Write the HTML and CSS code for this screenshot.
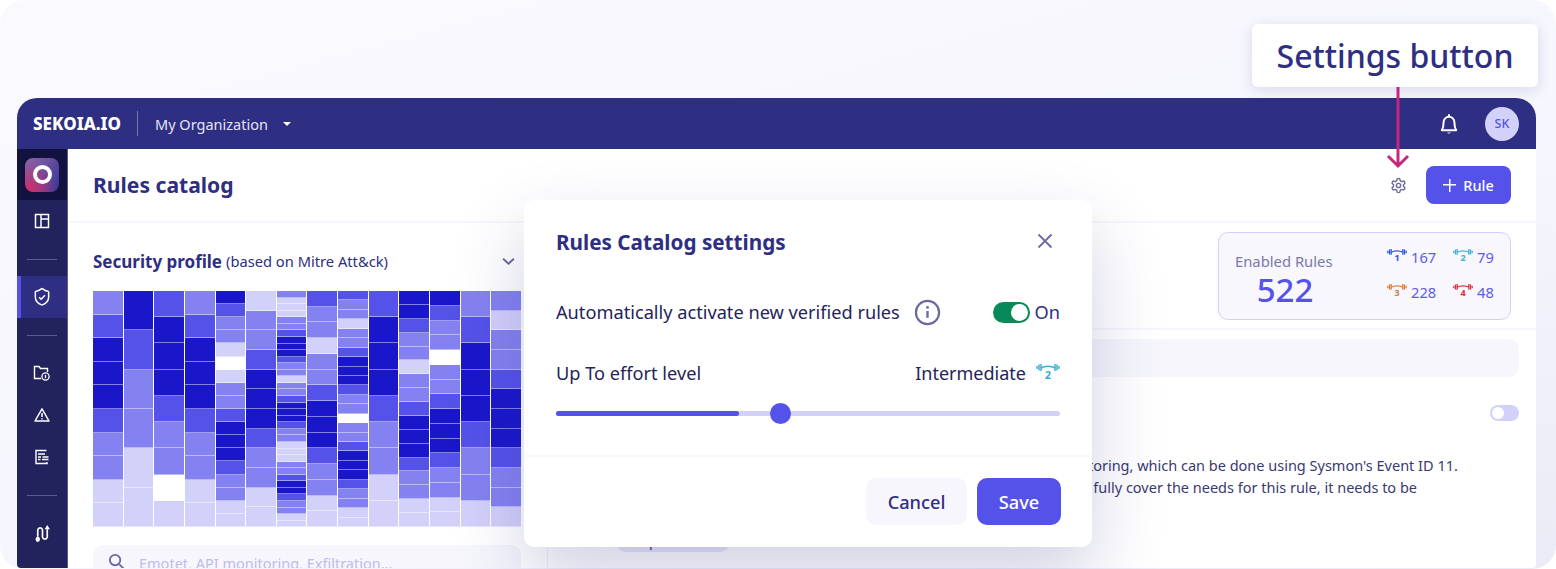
FILE: index.html
```html
<!DOCTYPE html>
<html lang="en">
<head>
<meta charset="utf-8">
<title>Rules catalog</title>
<link rel="stylesheet" href="styles.css">
</head>
<body>
<svg class="defs" width="0" height="0" aria-hidden="true">
  <symbol id="bell" viewBox="0 0 20 24"><path d="M4 10a6 6 0 0 1 12 0c0 6 1 7.500 2 9H2c1-1.500 2-3 2-9zM10 4V2" fill="none" stroke="currentColor" stroke-width="2.200" stroke-linejoin="round" stroke-linecap="round"/><path d="M8 21.500a2.300 2.300 0 0 0 4 0z" fill="currentColor"/></symbol>
  <symbol id="bar" viewBox="0 0 24 8"><path d="M5 5C9 2.500 15 2.500 19 5" fill="none" stroke="currentColor" stroke-width="1.500"/><path d="M1 3v3M3 1.500v6M5 1v7M19 1v7M21 1.500v6M23 3v3" stroke="currentColor" stroke-width="1.500" fill="none"/></symbol>
</svg>
<div class="page">
  <div class="app">
    <header class="topbar">
      <span class="brand">SEKOIA.IO</span>
      <span class="brand-sep"></span>
      <span class="org">My Organization</span>
      <span class="caret"></span>
      <svg class="bell"><use href="#bell"/></svg>
      <span class="avatar">SK</span>
    </header>
    <div class="shell">
      <nav class="side">
        <div class="side-logo"><span class="logo-tile"><span class="logo-ring"></span></span></div>
        <a class="side-item"><svg viewBox="0 0 16 16" class="side-icon"><path d="M1.500 1.500h13v13h-13zM7 1.500v13M7 6h7.500" fill="none" stroke="currentColor" stroke-width="1.500"/></svg></a>
        <div class="side-rule"></div>
        <a class="side-item active"><svg viewBox="0 0 24 24" class="side-icon big"><path d="M20 12c0 5.500-3.500 8-7.660 9.500a1 1 0 0 1-.68 0C7.500 20 4 17.500 4 12V6a1 1 0 0 1 1-1c2 0 4.500-1.200 6.240-2.720a1.170 1.170 0 0 1 1.520 0C14.510 3.810 17 5 19 5a1 1 0 0 1 1 1z" fill="none" stroke="currentColor" stroke-width="1.800"/><path d="m8.500 12.200 2.500 2.500 4.500-4.700" fill="none" stroke="currentColor" stroke-width="1.800"/></svg></a>
        <div class="side-rule"></div>
        <a class="side-item"><svg viewBox="0 0 18 16" class="side-icon wide"><path d="M8 13.500H1.500v-12H6l1.500 2h7V7" fill="none" stroke="currentColor" stroke-width="1.400"/><circle cx="12.500" cy="11.500" r="3.600" fill="none" stroke="currentColor" stroke-width="1.300"/><path d="M12.500 9.800v3.400" stroke="currentColor" stroke-width="1.300"/></svg></a>
        <a class="side-item"><svg viewBox="0 0 16 16" class="side-icon"><path d="M8 1.800 15 14H1z" fill="none" stroke="currentColor" stroke-width="1.500" stroke-linejoin="round"/><path d="M8 6v4M8 11.200v1.300" stroke="currentColor" stroke-width="1.500"/></svg></a>
        <a class="side-item"><svg viewBox="0 0 16 16" class="side-icon"><path d="M12.500 1.500H2v13h11V13" fill="none" stroke="currentColor" stroke-width="1.400"/><path d="M4 5h7M4 8h3M8.500 8h6M4 10.500h2.500M8 10.500h6.500" stroke="currentColor" stroke-width="1.300" fill="none"/></svg></a>
        <div class="side-rule"></div>
        <a class="side-item"><svg viewBox="0 0 16 18" class="side-icon route"><path d="M3.500 12V5.500a2.300 2.300 0 0 1 4.500 0v7a2.300 2.300 0 0 0 4.500 0V5" fill="none" stroke="currentColor" stroke-width="1.600"/><rect x="1.500" y="12" width="4" height="5" rx="2" fill="currentColor"/><path d="M12.500 1 15 5h-5z" fill="currentColor"/></svg></a>
      </nav>
      <main class="main">
        <div class="page-head">
          <h1 class="page-title">Rules catalog</h1>
          <svg viewBox="0 0 24 24" class="gear"><path d="M12.220 2h-.44a2 2 0 0 0-2 2v.18a2 2 0 0 1-1 1.730l-.43.25a2 2 0 0 1-2 0l-.15-.08a2 2 0 0 0-2.730.73l-.22.38a2 2 0 0 0 .73 2.730l.15.1a2 2 0 0 1 1 1.720v.51a2 2 0 0 1-1 1.740l-.15.09a2 2 0 0 0-.73 2.730l.22.38a2 2 0 0 0 2.730.73l.15-.08a2 2 0 0 1 2 0l.43.25a2 2 0 0 1 1 1.730V20a2 2 0 0 0 2 2h.44a2 2 0 0 0 2-2v-.18a2 2 0 0 1 1-1.730l.43-.25a2 2 0 0 1 2 0l.15.08a2 2 0 0 0 2.730-.73l.22-.39a2 2 0 0 0-.73-2.730l-.15-.08a2 2 0 0 1-1-1.740v-.5a2 2 0 0 1 1-1.740l.15-.09a2 2 0 0 0 .73-2.730l-.22-.38a2 2 0 0 0-2.730-.73l-.15.08a2 2 0 0 1-2 0l-.43-.25a2 2 0 0 1-1-1.730V4a2 2 0 0 0-2-2z" fill="none" stroke="currentColor" stroke-width="2"/><circle cx="12" cy="12" r="3" fill="none" stroke="currentColor" stroke-width="2"/></svg>
          <button class="btn-rule"><span class="plus"></span>Rule</button>
        </div>
        <div class="body">
          <section class="left">
            <div class="profile-head">
              <span class="profile-title">Security profile</span>
              <span class="profile-sub">(based on Mitre Att&amp;ck)</span>
              <svg viewBox="0 0 12 8" class="chev"><path d="M1 1.500 6 6l5-4.500" fill="none" stroke="currentColor" stroke-width="1.800"/></svg>
            </div>
            <div class="heat">
              <div class="col"><i class="m"></i><i class="s"></i><i class="d"></i><i class="d"></i><i class="d"></i><i class="s"></i><i class="m"></i><i class="m"></i><i class="l"></i><i class="l"></i></div>
              <div class="col"><i class="d"></i><i class="s"></i><i class="m"></i><i class="m"></i><i class="l"></i><i class="l"></i></div>
              <div class="col"><i class="s"></i><i class="d"></i><i class="d"></i><i class="d"></i><i class="s"></i><i class="m"></i><i class="m"></i><i class="w"></i><i class="l"></i></div>
              <div class="col"><i class="m"></i><i class="s"></i><i class="d"></i><i class="d"></i><i class="d"></i><i class="s"></i><i class="m"></i><i class="m"></i><i class="l"></i><i class="l"></i></div>
              <div class="col"><i class="d"></i><i class="s"></i><i class="m"></i><i class="m"></i><i class="l"></i><i class="w"></i><i class="l"></i><i class="m"></i><i class="m"></i><i class="s"></i><i class="d"></i><i class="d"></i><i class="d"></i><i class="s"></i><i class="m"></i><i class="m"></i><i class="l"></i><i class="l"></i></div>
              <div class="col"><i class="l"></i><i class="m"></i><i class="m"></i><i class="s"></i><i class="d"></i><i class="d"></i><i class="d"></i><i class="s"></i><i class="m"></i><i class="m"></i><i class="l"></i><i class="l"></i></div>
              <div class="col"><i class="m"></i><i class="l"></i><i class="l"></i><i class="l"></i><i class="m"></i><i class="m"></i><i class="s"></i><i class="d"></i><i class="d"></i><i class="d"></i><i class="s"></i><i class="m"></i><i class="m"></i><i class="l"></i><i class="m"></i><i class="m"></i><i class="s"></i><i class="d"></i><i class="d"></i><i class="d"></i><i class="s"></i><i class="m"></i><i class="m"></i><i class="l"></i><i class="l"></i><i class="l"></i><i class="m"></i><i class="m"></i><i class="s"></i><i class="d"></i><i class="d"></i><i class="s"></i><i class="m"></i><i class="m"></i><i class="l"></i><i class="l"></i></div>
              <div class="col"><i class="s"></i><i class="m"></i><i class="m"></i><i class="l"></i><i class="m"></i><i class="m"></i><i class="s"></i><i class="d"></i><i class="d"></i><i class="d"></i><i class="s"></i><i class="m"></i><i class="m"></i><i class="l"></i><i class="l"></i></div>
              <div class="col"><i class="s"></i><i class="m"></i><i class="m"></i><i class="l"></i><i class="m"></i><i class="m"></i><i class="s"></i><i class="d"></i><i class="d"></i><i class="d"></i><i class="s"></i><i class="m"></i><i class="m"></i><i class="w"></i><i class="m"></i><i class="m"></i><i class="s"></i><i class="d"></i><i class="d"></i><i class="d"></i><i class="s"></i><i class="m"></i><i class="m"></i><i class="l"></i><i class="l"></i></div>
              <div class="col"><i class="s"></i><i class="d"></i><i class="d"></i><i class="d"></i><i class="s"></i><i class="m"></i><i class="m"></i><i class="l"></i><i class="l"></i></div>
              <div class="col"><i class="d"></i><i class="d"></i><i class="s"></i><i class="m"></i><i class="m"></i><i class="l"></i><i class="m"></i><i class="m"></i><i class="s"></i><i class="d"></i><i class="d"></i><i class="d"></i><i class="s"></i><i class="m"></i><i class="m"></i><i class="l"></i><i class="l"></i></div>
              <div class="col"><i class="d"></i><i class="s"></i><i class="m"></i><i class="m"></i><i class="w"></i><i class="m"></i><i class="m"></i><i class="s"></i><i class="d"></i><i class="d"></i><i class="d"></i><i class="s"></i><i class="m"></i><i class="m"></i><i class="l"></i><i class="l"></i></div>
              <div class="col"><i class="m"></i><i class="s"></i><i class="d"></i><i class="d"></i><i class="d"></i><i class="s"></i><i class="m"></i><i class="m"></i><i class="l"></i></div>
              <div class="col"><i class="m"></i><i class="l"></i><i class="m"></i><i class="m"></i><i class="s"></i><i class="d"></i><i class="d"></i><i class="d"></i><i class="s"></i><i class="m"></i><i class="m"></i><i class="l"></i></div>
            </div>
            <div class="left-search">
              <svg viewBox="0 0 18 18" class="search-icon"><circle cx="7.500" cy="7.500" r="5.500" fill="none" stroke="currentColor" stroke-width="2"/><path d="m12 12 5 5" stroke="currentColor" stroke-width="2"/></svg>
              <span class="placeholder">Emotet, API monitoring, Exfiltration...</span>
            </div>
          </section>
          <section class="right">
            <div class="stats-band">
              <div class="stats">
                <div class="stats-total">
                  <span class="stats-label">Enabled Rules</span>
                  <span class="stats-num">522</span>
                </div>
                <div class="stats-grid">
                  <div class="stat"><span class="bell-wrap lv1"><svg class="bar"><use href="#bar"/></svg><b>1</b></span>167</div>
                  <div class="stat"><span class="bell-wrap lv2"><svg class="bar"><use href="#bar"/></svg><b>2</b></span>79</div>
                  <div class="stat"><span class="bell-wrap lv3"><svg class="bar"><use href="#bar"/></svg><b>3</b></span>228</div>
                  <div class="stat"><span class="bell-wrap lv4"><svg class="bar"><use href="#bar"/></svg><b>4</b></span>48</div>
                </div>
              </div>
            </div>
            <div class="right-search"></div>
            <div class="rule-row">
              <span class="mini-toggle"><span class="mini-knob"></span></span>
            </div>
            <p class="rule-text">Prerequisites: this detection requires the file creation events monitoring, which can be done using Sysmon's Event ID 11.<br>However, as the default Sysmon configuration file mainly does not fully cover the needs for this rule, it needs to be</p>
            <span class="rule-tag"><svg viewBox="0 0 10 10" class="tag-icon"><path d="M1 1h8L5 9z" fill="currentColor"/></svg>p</span>
          </section>
        </div>
      </main>
    </div>
  </div>

  <div class="callout">Settings button</div>
  <svg class="arrow" viewBox="0 0 24 82"><path d="M12 0v79M2 69l10 10 10-10" fill="none" stroke="#c4277f" stroke-width="3"/></svg>

  <div class="modal">
    <div class="modal-head">
      <h2 class="modal-title">Rules Catalog settings</h2>
      <svg viewBox="0 0 16 16" class="close"><path d="m1.500 1.500 13 13M14.500 1.500l-13 13" stroke="currentColor" stroke-width="1.800" fill="none"/></svg>
    </div>
    <div class="modal-row first">
      <span class="modal-label">Automatically activate new verified rules</span>
      <svg viewBox="0 0 28 28" class="info"><circle cx="14" cy="14" r="12" fill="none" stroke="currentColor" stroke-width="2.300"/><path d="M14 12.500v7" stroke="currentColor" stroke-width="2.500"/><circle cx="14" cy="8.700" r="1.500" fill="currentColor"/></svg>
      <span class="toggle"><span class="knob"></span></span>
      <span class="toggle-text">On</span>
    </div>
    <div class="modal-row second">
      <span class="modal-label">Up To effort level</span>
      <span class="level">Intermediate</span>
      <span class="bell-wrap lv2 large"><svg class="bar"><use href="#bar"/></svg><b>2</b></span>
    </div>
    <div class="slider"><span class="slider-fill"></span><span class="slider-thumb"></span></div>
    <div class="modal-foot">
      <button class="btn cancel">Cancel</button>
      <button class="btn save">Save</button>
    </div>
  </div>
</div>
</body>
</html>
```
FILE: styles.css
```css
* { box-sizing: border-box; }
html, body { margin: 0; padding: 0; background: #fff; }
body { font-family: "Noto Sans", "Open Sans", sans-serif; color: #2e2e82; }
.defs { position: absolute; }
.page { position: relative; width: 1556px; height: 569px; overflow: hidden; border-radius: 24px; background: linear-gradient(165deg, #fafafe 0%, #f5f5fd 60%, #ebebf7 100%); padding: 98px 20px 1px 17px; }

.app { height: 470px; border-radius: 20px 20px 4px 4px; overflow: hidden; background: #fff; display: flex; flex-direction: column; }
.topbar { height: 51px; flex: none; background: #2e2e82; display: flex; align-items: center; color: #fff; padding: 0 17px 0 16px; }
.brand { font-weight: 800; font-size: 17px; width: 88px; white-space: nowrap; }
.brand-sep { width: 1px; height: 25px; background: rgba(255,255,255,.35); margin: 0 17px 0 16px; }
.org { font-size: 14.500px; color: #e4e4f7; }
.caret { width: 0; height: 0; border: 4px solid transparent; border-top: 4px solid #fff; border-bottom: 0; margin-left: 15px; }
.bell { width: 18px; height: 22px; margin-left: auto; margin-right: 27px; color: #fff; }
.avatar { width: 34px; height: 34px; border-radius: 50%; background: #d2d1fa; color: #5552ea; font-size: 12.500px; font-weight: 500; display: flex; align-items: center; justify-content: center; }

.shell { flex: 1; display: flex; min-height: 0; }
.side { width: 51px; flex: none; background: #22225c; display: flex; flex-direction: column; color: #fff; border-right: 1px solid #5c5c92; }
.side-logo { height: 51px; background: #12123e; display: flex; align-items: center; justify-content: center; flex: none; }
.logo-tile { width: 34px; height: 34px; border-radius: 8px; background: radial-gradient(circle at 10% 100%, #d42c66 0%, rgba(212,44,102,0) 65%), linear-gradient(120deg, #8f64a5 0%, #6a4f9f 50%, #32339a 100%); display: flex; align-items: center; justify-content: center; }
.logo-ring { width: 19px; height: 19px; border-radius: 50%; border: 4.500px solid #fff; }
.side-item { height: 42px; flex: none; display: flex; align-items: center; justify-content: center; }
.side-item.active { background: #2e2e82; box-shadow: inset 4px 0 0 #5552ea; }
.side-icon { width: 16px; height: 16px; }
.side-icon.big { width: 20px; height: 20px; }
.side-icon.wide { width: 18px; height: 16px; }
.side-icon.route { width: 17px; height: 19px; }
.side-rule { height: 34px; flex: none; display: flex; align-items: center; justify-content: center; }
.side-rule::before { content: ""; width: 30px; height: 1px; background: #5c5c92; }

.main { flex: 1; min-width: 0; display: flex; flex-direction: column; }
.page-head { height: 74px; flex: none; display: flex; align-items: center; padding: 0 25px; border-bottom: 2px solid #f6f6fc; }
.page-title { margin: 0 0 1px; font-size: 21.100px; font-weight: 700; color: #2e2e82; }
.gear { width: 17px; height: 17px; color: #6a6a9f; margin-left: auto; margin-right: 19px; }
.btn-rule { width: 85px; height: 38px; background: #5552ea; border: 0; border-radius: 8px; color: #fff; font: 500 14.500px "Noto Sans", sans-serif; display: flex; align-items: center; justify-content: center; gap: 7px; }
.plus { width: 13px; height: 13px; background: linear-gradient(#fff,#fff) center/13px 1.500px no-repeat, linear-gradient(#fff,#fff) center/1.500px 13px no-repeat; }

.body { flex: 1; display: flex; min-height: 0; }
.left { width: 480px; flex: none; padding: 0 26px 0 25px; border-right: 1px solid #f0f0f8; display: flex; flex-direction: column; }
.profile-head { height: 68px; flex: none; display: flex; align-items: center; gap: 4px; padding-top: 8px; white-space: nowrap; }
.profile-title { font-size: 17px; font-weight: 700; }
.profile-sub { font-size: 14.700px; }
.chev { width: 13px; height: 9px; margin-left: auto; margin-right: 6px; color: #6a6a9f; }
.heat { height: 236px; flex: none; display: flex; gap: 1px; }
.col { flex: 1; display: flex; flex-direction: column; }
.col i { flex: 1; min-height: 0; border-bottom: 1px solid rgba(255,255,255,.45); }
.col .d { background: #1a17cb; }
.col .s { background: #5552ea; }
.col .m { background: #8482f0; }
.col .l { background: #d2d1fa; }
.col .w { background: #fff; }
.left-search { height: 40px; margin-top: 18px; flex: none; background: #f6f6fc; border-radius: 10px; display: flex; align-items: flex-start; padding: 8px 15px 0; gap: 14px; }
.search-icon { width: 17px; height: 17px; color: #6a6a9f; flex: none; }
.placeholder { font-size: 14.500px; line-height: 20px; color: #bdbcec; }

.right { flex: 1; min-width: 0; display: flex; flex-direction: column; }
.stats-band { height: 107px; flex: none; display: flex; justify-content: flex-end; padding: 9px 25px 0 0; border-bottom: 2px solid #f6f6fc; }
.stats { width: 293px; height: 88px; border: 1px solid #d2d1fa; border-radius: 10px; background: #f7f7fd; display: flex; padding: 0 17px 0 16px; }
.stats-total { width: 152px; flex: none; display: flex; flex-direction: column; padding-top: 18px; }
.stats-label { font-size: 14.800px; color: #7a7aa8; line-height: 20px; white-space: nowrap; }
.stats-num { font-size: 33px; font-weight: 500; color: #5552ea; line-height: 38px; text-align: center; width: 100px; }
.stats-grid { flex: 1; display: grid; grid-template-columns: 66px 1fr; grid-template-rows: 35px 35px; align-content: center; padding-bottom: 4px; }
.stat { display: flex; align-items: center; font-size: 14.700px; color: #5e5bea; gap: 4px; }
.bell-wrap { display: inline-flex; flex-direction: column; align-items: center; width: 20px; height: 18px; }
.bell-wrap .bar { width: 20px; height: 7px; }
.bell-wrap b { font-size: 9px; line-height: 8px; font-weight: 700; margin-top: -1px; }
.lv1 { color: #2a52d8; }
.lv2 { color: #3cb1d4; }
.lv3 { color: #dc7a34; }
.lv4 { color: #d8303c; }
.bell-wrap.large { width: 24px; height: 20px; margin-left: 10px; }
.bell-wrap.large .bar { width: 24px; height: 8px; }
.bell-wrap.large b { font-size: 11px; line-height: 10px; }
.right-search { height: 38px; flex: none; margin: 9px 17px 0 0; background: #f6f6fc; border-radius: 10px; }
.rule-row { flex: none; display: flex; justify-content: flex-end; padding: 28px 17px 0 0; }
.mini-toggle { width: 29px; height: 16px; border-radius: 8px; background: #d2d1fa; padding: 2px; display: block; }
.mini-knob { display: block; width: 12px; height: 12px; border-radius: 50%; background: #fff; }
.rule-text { margin: 33px 0 0; padding-left: 93px; font-size: 14.500px; line-height: 22px; color: #3a3a70; white-space: nowrap; }
.rule-tag { width: 114px; height: 30px; margin: 24px 0 0 68px; border-radius: 10px; background: #e8e8fa; display: flex; align-items: flex-end; padding: 0 0 2px 16px; font-size: 14px; line-height: 18px; gap: 9px; color: #2e2e82; flex: none; }
.tag-icon { width: 8px; height: 8px; margin-bottom: 2px; }

.callout { position: absolute; left: 1252px; top: 24px; width: 286px; height: 63px; background: #fff; border-radius: 6px; box-shadow: 0 3px 14px rgba(46,46,130,.14); font-size: 32px; font-weight: 500; color: #2e2e82; display: flex; align-items: center; justify-content: center; }
.arrow { position: absolute; left: 1386px; top: 87px; width: 24px; height: 82px; }

.modal { position: absolute; left: 524px; top: 200px; width: 568px; height: 347px; background: #fff; border-radius: 10px; box-shadow: 0 30px 70px rgba(46,46,130,.22); display: flex; flex-direction: column; padding: 0 32px; }
.modal-head { height: 84px; flex: none; display: flex; align-items: center; justify-content: space-between; }
.modal-title { margin: 0; font-size: 20.700px; font-weight: 700; color: #2e2e82; }
.close { width: 16px; height: 16px; color: #6a6a9f; margin-right: 7px; margin-top: -2px; }
.modal-row { display: flex; align-items: center; color: #24245a; font-size: 18.200px; flex: none; }
.modal-row.first { height: 56px; }
.modal-row.second { height: 66px; }
.modal-label { white-space: nowrap; }
.info { width: 27px; height: 27px; color: #6a6a9f; margin-left: 14px; }
.toggle { width: 37px; height: 21px; border-radius: 11px; background: #078a58; margin-left: auto; padding: 2px; display: flex; justify-content: flex-end; }
.knob { width: 17px; height: 17px; border-radius: 50%; background: #fff; }
.toggle-text { margin-left: 5px; color: #2e2e82; }
.level { margin-left: auto; font-size: 18px; }
.slider { position: relative; height: 5px; border-radius: 3px; background: #d2d1fa; flex: none; margin-top: 5px; }
.slider-fill { display: block; height: 5px; width: 183px; border-radius: 3px; background: #5552ea; }
.slider-thumb { position: absolute; left: 214px; top: -8px; width: 21px; height: 21px; border-radius: 50%; background: #5552ea; }
.modal-foot { margin: 39px -32px 0; flex: 1; border-top: 2px solid #f8f8fd; display: flex; justify-content: flex-end; gap: 10px; padding: 21px 31px 0 0; }
.btn { height: 47px; border: 0; border-radius: 10px; font: 500 18.200px "Noto Sans", sans-serif; }
.cancel { width: 101px; background: #f6f6fc; color: #2e2e82; }
.save { width: 84px; background: #5552ea; color: #fff; }
```
